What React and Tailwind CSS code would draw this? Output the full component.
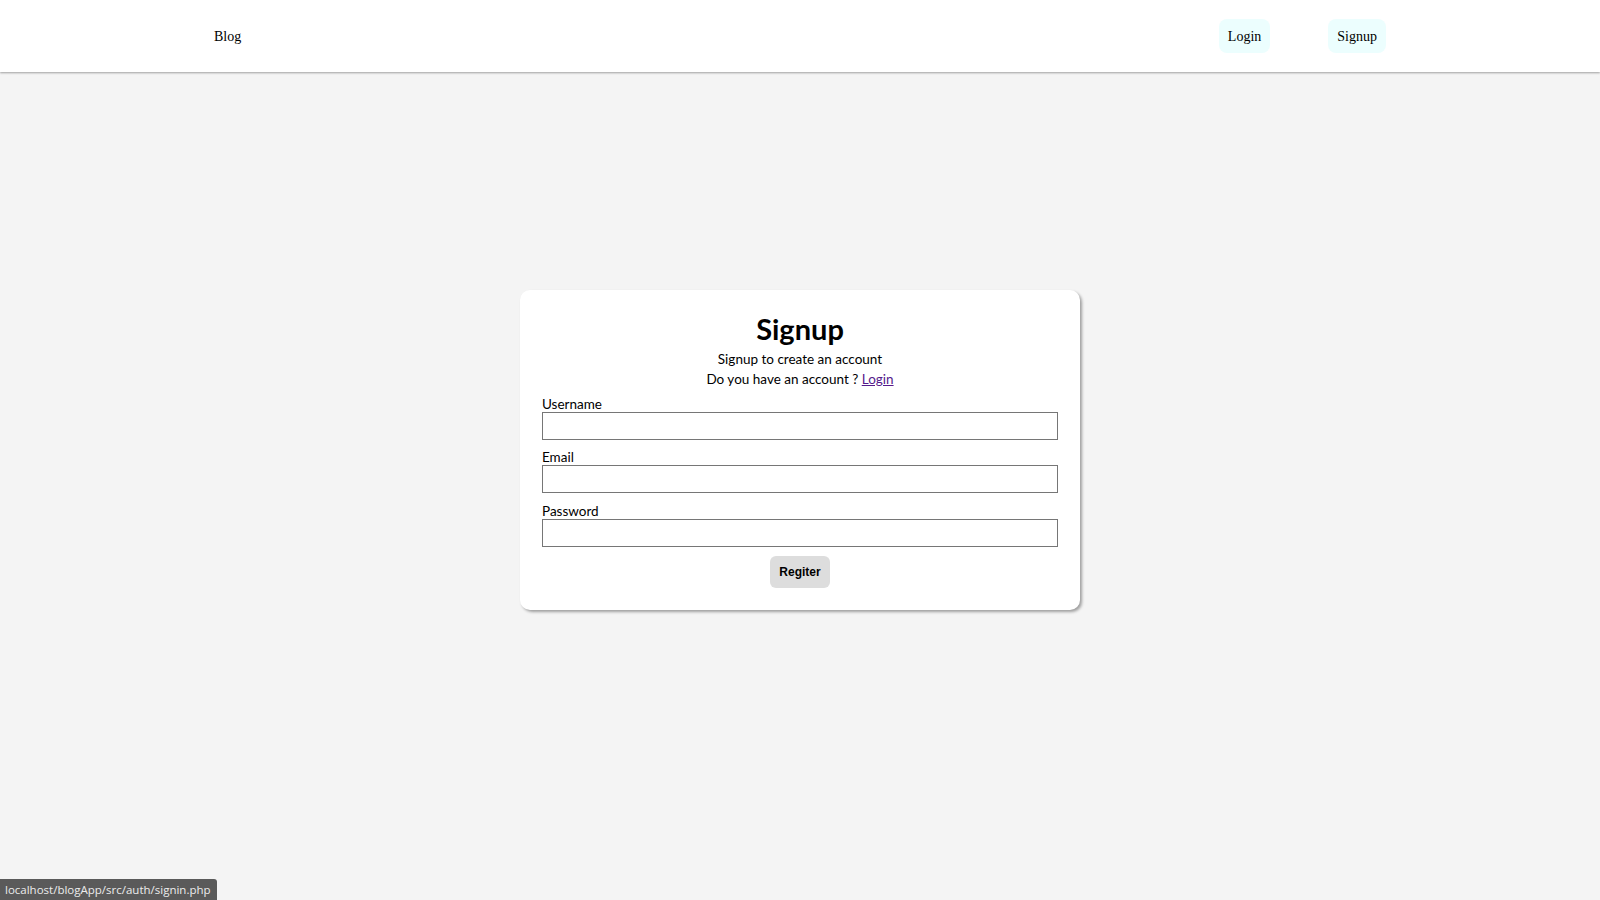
import React from 'react';

const Field = ({ label, type = 'text', className = '' }) => (
    <div className={className}>
        <label className="block text-[13.5px] leading-[16px] text-black">{label}</label>
        <input
            type={type}
            className="block w-full h-[28px] border border-[#767676] bg-white outline-none"
        />
    </div>
);

export default function App() {
    return (
        <div className="min-h-screen bg-[#f4f4f4]" style={{ fontFamily: 'Lato, "Open Sans", sans-serif' }}>
            {/* Top bar */}
            <header className="h-[72px] bg-white shadow-[0_1px_2px_rgba(0,0,0,0.35)] flex items-center justify-between px-[214px] font-['Liberation_Serif',serif] text-[14px] text-black">
                <a className="cursor-pointer">Blog</a>
                <nav className="flex items-center gap-[58px]">
                    <a className="h-[34px] px-[9px] flex items-center rounded-[8px] bg-[#ecfefe] cursor-pointer">Login</a>
                    <a className="h-[34px] px-[9px] flex items-center rounded-[8px] bg-[#ecfefe] cursor-pointer">Signup</a>
                </nav>
            </header>

            {/* Signup card */}
            <main className="flex justify-center pt-[218px]">
                <div className="w-[560px] bg-white rounded-[10px] shadow-[2px_2px_3px_rgba(0,0,0,0.35)] px-[22px] pt-[23px] pb-[22px]">
                    <h1 className="text-center text-[29px] leading-[31px] font-bold text-black">Signup</h1>
                    <p className="mt-[5px] text-center text-[13.5px] leading-[20px] text-black">Signup to create an account</p>
                    <p className="text-center text-[13.5px] leading-[20px] text-black">
                        Do you have an account ? <a className="text-[#551a8b] underline cursor-pointer">Login</a>
                    </p>

                    <form className="mt-[7px]" onSubmit={(e) => e.preventDefault()}>
                        <Field label="Username" />
                        <Field label="Email" type="email" className="mt-[9px]" />
                        <Field label="Password" type="password" className="mt-[10px]" />
                        <div className="mt-[9px] flex justify-center">
                            <button
                                type="submit"
                                className="h-[32px] px-[9px] rounded-[6px] bg-[#dddddd] text-[12px] font-bold text-black font-['Liberation_Sans',Arial,sans-serif]"
                            >
                                Regiter
                            </button>
                        </div>
                    </form>
                </div>
            </main>

            {/* browser status bubble */}
            <div className="fixed left-0 bottom-0 h-[21px] pl-[5px] pr-[6px] flex items-center bg-[#5a5a5a] text-[#ececec] text-[11.5px] rounded-tr-[3px] font-['Open_Sans',sans-serif] whitespace-nowrap">
                localhost/blogApp/src/auth/signin.php
            </div>
        </div>
    );
}
